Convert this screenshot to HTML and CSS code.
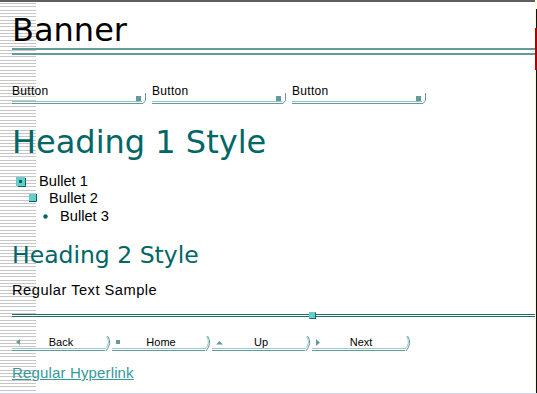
FILE: index.html
```html
<!DOCTYPE html>
<html>
<head>
<meta charset="utf-8">
<title>Theme Preview</title>
<link rel="stylesheet" href="styles.css">
</head>
<body>
<div class="screen">
  <div class="page">
    <header class="banner">Banner</header>
    <div class="banner-rule"></div>
    <nav class="topnav">
      <a class="tbtn"><svg class="deco" width="135" height="18" viewBox="0 0 135 18"><path d="M0 15.5H130" stroke="#8fc4c4"/><path d="M0 17.5H131" stroke="#669999"/><rect x="124" y="10" width="5" height="5" fill="#669999"/><path d="M133.5 7V14.5L131 17.5" stroke="#669999" fill="none"/></svg><span>Button</span></a>
      <a class="tbtn"><svg class="deco" width="135" height="18" viewBox="0 0 135 18"><path d="M0 15.5H130" stroke="#8fc4c4"/><path d="M0 17.5H131" stroke="#669999"/><rect x="124" y="10" width="5" height="5" fill="#669999"/><path d="M133.5 7V14.5L131 17.5" stroke="#669999" fill="none"/></svg><span>Button</span></a>
      <a class="tbtn"><svg class="deco" width="135" height="18" viewBox="0 0 135 18"><path d="M0 15.5H130" stroke="#8fc4c4"/><path d="M0 17.5H131" stroke="#669999"/><rect x="124" y="10" width="5" height="5" fill="#669999"/><path d="M133.5 7V14.5L131 17.5" stroke="#669999" fill="none"/></svg><span>Button</span></a>
    </nav>
    <h1 class="h1">Heading 1 Style</h1>
    <ul class="bullets">
      <li class="b1"><svg class="mark1" width="11" height="10" viewBox="0 0 11 10"><rect x="0" y="0" width="9" height="9" fill="#66cccc"/><rect x="3" y="3" width="3" height="3" fill="#006666"/><path d="M9.5 1V9.5H2" stroke="#006666" fill="none"/></svg><span>Bullet 1</span></li>
      <li class="b2"><svg class="mark2" width="8" height="8" viewBox="0 0 8 8"><rect x="0" y="0" width="7" height="7" fill="#66cccc"/><path d="M7.5 0V7.5H0" stroke="#006666" fill="none"/></svg><span>Bullet 2</span></li>
      <li class="b3"><svg class="mark3" width="5" height="5" viewBox="0 0 5 5"><circle cx="2.5" cy="2.5" r="2.2" fill="#006666"/></svg><span>Bullet 3</span></li>
    </ul>
    <h2 class="h2">Heading 2 Style</h2>
    <p class="text">Regular Text Sample</p>
    <div class="hrule"><span class="knob"></span></div>
    <nav class="botnav">
      <a class="nbtn"><svg class="deco" width="100" height="18" viewBox="0 0 100 18"><path d="M0 14.5H94" stroke="#99cccc"/><path d="M0 16.5H93" stroke="#669999"/><path d="M95.5 2Q100.5 9 94 17" stroke="#669999" fill="none"/><path d="M94.5 2.5Q99 9 93 15" stroke="#99cccc" fill="none"/><path d="M8 5V11L4 8Z" fill="#669999"/></svg><span>Back</span></a>
      <a class="nbtn"><svg class="deco" width="100" height="18" viewBox="0 0 100 18"><path d="M0 14.5H94" stroke="#99cccc"/><path d="M0 16.5H93" stroke="#669999"/><path d="M95.5 2Q100.5 9 94 17" stroke="#669999" fill="none"/><path d="M94.5 2.5Q99 9 93 15" stroke="#99cccc" fill="none"/><rect x="4" y="6" width="4" height="4" fill="#669999"/></svg><span>Home</span></a>
      <a class="nbtn"><svg class="deco" width="100" height="18" viewBox="0 0 100 18"><path d="M0 14.5H94" stroke="#99cccc"/><path d="M0 16.5H93" stroke="#669999"/><path d="M95.5 2Q100.5 9 94 17" stroke="#669999" fill="none"/><path d="M94.5 2.5Q99 9 93 15" stroke="#99cccc" fill="none"/><path d="M4 10.5L7.5 7L11 10.5Z" fill="#669999"/></svg><span>Up</span></a>
      <a class="nbtn"><svg class="deco" width="100" height="18" viewBox="0 0 100 18"><path d="M0 14.5H94" stroke="#99cccc"/><path d="M0 16.5H93" stroke="#669999"/><path d="M95.5 2Q100.5 9 94 17" stroke="#669999" fill="none"/><path d="M94.5 2.5Q99 9 93 15" stroke="#99cccc" fill="none"/><path d="M4 5V12L8 8.5Z" fill="#669999"/></svg><span>Next</span></a>
    </nav>
    <a class="link" href="#">Regular Hyperlink</a>
  </div>
  <div class="edge">
    <div class="edge-top"></div>
    <div class="edge-black"></div>
    <div class="edge-red"></div>
  </div>
</div>
<div class="edge-bottom"></div>
</body>
</html>
```

FILE: styles.css
```css
* { box-sizing: border-box; }
html, body { margin: 0; padding: 0; }
body {
  width: 537px;
  height: 394px;
  overflow: hidden;
  background: #fff;
  font-family: "Liberation Sans", Arial, sans-serif;
  color: #000;
}
.screen { display: flex; height: 393px; }
.page {
  flex: 1;
  display: flex;
  flex-direction: column;
  align-items: flex-start;
  border-top: 2px solid #5e5e5e;
  padding-left: 12px;
  background-color: #fff;
  background-image: linear-gradient(to bottom,
    #c6c6c6 0 1px, transparent 1px 3px,
    #c6c6c6 3px 4px, transparent 4px 7px,
    #c6c6c6 7px 8px, transparent 8px 10px);
  background-size: 36px 10px;
  background-repeat: repeat-y;
  background-position: 0 1px;
}
.banner {
  font-family: "DejaVu Sans", Verdana, sans-serif;
  font-size: 32px;
  line-height: 34px;
  margin: 11px 0 0 0;
}
.banner-rule {
  align-self: stretch;
  margin-top: 1px;
  height: 7px;
  border-top: 2px solid #669999;
  border-bottom: 2px solid #669999;
}
.topnav { display: flex; gap: 5px; margin-top: 31px; }
.tbtn {
  position: relative;
  display: block;
  width: 135px;
  height: 18px;
  color: #000;
  text-decoration: none;
  font-size: 12px;
  line-height: 12px;
  letter-spacing: 0.3px;
  margin-top: -1px;
}
.tbtn .deco { position: absolute; left: 0; top: 1px; }
.tbtn span { position: relative; }
.h1 {
  font-family: "DejaVu Sans", Verdana, sans-serif;
  font-weight: normal;
  font-size: 32px;
  line-height: 36px;
  color: #006666;
  margin: 21px 0 0 0;
}
.bullets {
  list-style: none;
  margin: 13px 0 0 0;
  padding: 0;
  font-size: 14.67px;
  line-height: 17.3px;
}
.bullets li { display: flex; align-items: center; }
.b1 { padding-left: 4px; }
.b1 .mark1 { margin-right: 12px; margin-top: 1px; }
.b2 { padding-left: 17px; }
.b2 .mark2 { margin-right: 12px; margin-top: -1px; }
.b3 { padding-left: 31px; }
.b3 .mark3 { margin-right: 12px; }
.h2 {
  font-family: "DejaVu Sans", Verdana, sans-serif;
  font-weight: normal;
  font-size: 23.5px;
  line-height: 28px;
  color: #006666;
  margin: 16px 0 0 0;
}
.text {
  margin: 13px 0 0 0;
  font-size: 14.67px;
  line-height: 17px;
  letter-spacing: 0.5px;
}
.hrule {
  position: relative;
  align-self: stretch;
  margin-top: 15px;
  height: 3px;
  border-top: 1px solid #1f6a6a;
  border-bottom: 1px solid #1f6a6a;
}
.knob {
  position: absolute;
  left: 297px;
  top: -3px;
  width: 7px;
  height: 7px;
  background: #66cccc;
  border: 1px solid #1f6a6a;
  border-top-color: #66cccc;
  border-left-color: #66cccc;
}
.botnav { display: flex; gap: 2px; margin-top: 17px; }
.nbtn {
  position: relative;
  display: block;
  width: 98px;
  height: 18px;
  color: #000;
  text-decoration: none;
  font-size: 11px;
  line-height: 12px;
  padding-top: 2px;
  text-align: center;
}
.nbtn .deco { position: absolute; left: 0; top: 0; }
.nbtn span { position: relative; }
.link {
  margin-top: 12px;
  font-size: 15px;
  line-height: 17px;
  color: #339999;
  text-decoration: underline;
  letter-spacing: 0.15px;
}
.edge {
  width: 2px;
  display: flex;
  flex-direction: column;
  background: linear-gradient(to right, #fafac8 0 1px, #111 1px 2px);
}
.edge-top { height: 9px; background: #fdfde6; }
.edge-black { height: 19px; }
.edge-red { height: 42px; background: #b00000; }
.edge-bottom { height: 1px; background: #d2d2f6; }
```
